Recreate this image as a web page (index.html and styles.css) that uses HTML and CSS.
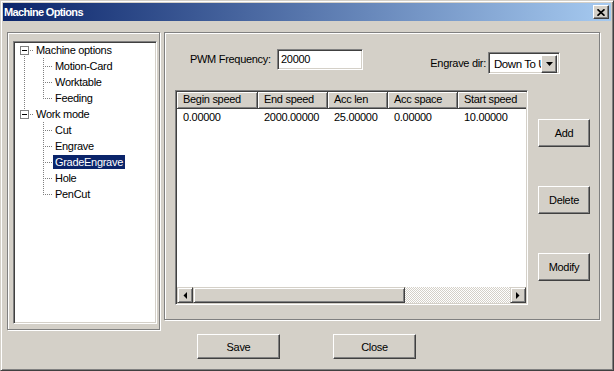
FILE: index.html
```html
<!DOCTYPE html>
<html lang="en">

<head>
    <meta charset="UTF-8">
    <title>Machine Options</title>
    <link rel="stylesheet" href="styles.css">
</head>

<body>

    <div class="ventana">
        <div class="titulo">
            <span class="titulo-texto">Machine Options</span>
            <span class="btn-cerrar">
                <svg width="8" height="7" viewBox="0 0 8 7"><path d="M0.5 0.3L7.5 6.7M7.5 0.3L0.5 6.7" stroke="#000" stroke-width="1.7" /></svg>
            </span>
        </div>

        <div class="cuerpo">
            <!-- arbol de opciones -->
            <div class="grupo grupo-izq">
                <div class="arbol">
                    <div class="nodo"><span class="g g-primero"><i class="caja"></i></span><span class="txt">Machine options</span></div>
                    <div class="nodo"><span class="g g-pipe"></span><span class="g g-tee"></span><span class="txt">Motion-Card</span></div>
                    <div class="nodo"><span class="g g-pipe"></span><span class="g g-tee"></span><span class="txt">Worktable</span></div>
                    <div class="nodo"><span class="g g-pipe"></span><span class="g g-fin"></span><span class="txt">Feeding</span></div>
                    <div class="nodo"><span class="g g-ultimo"><i class="caja"></i></span><span class="txt">Work mode</span></div>
                    <div class="nodo"><span class="g"></span><span class="g g-tee"></span><span class="txt">Cut</span></div>
                    <div class="nodo"><span class="g"></span><span class="g g-tee"></span><span class="txt">Engrave</span></div>
                    <div class="nodo"><span class="g"></span><span class="g g-tee"></span><span class="txt sel">GradeEngrave</span></div>
                    <div class="nodo"><span class="g"></span><span class="g g-tee"></span><span class="txt">Hole</span></div>
                    <div class="nodo"><span class="g"></span><span class="g g-fin"></span><span class="txt">PenCut</span></div>
                </div>
            </div>

            <div class="columna-der">
                <div class="grupo grupo-der">
                    <div class="fila-arriba">
                        <span class="lbl-pwm">PWM Frequency:</span>
                        <span class="campo">20000</span>
                        <span class="lbl-dir">Engrave dir:</span>
                        <span class="combo">
                            <span class="combo-txt">Down To Up</span>
                            <span class="combo-btn"><svg width="7" height="4" viewBox="0 0 7 4"><path d="M0 0H7L3.5 4Z" /></svg></span>
                        </span>
                    </div>

                    <div class="fila-main">
                        <div class="lista">
                            <div class="cabecera">
                                <span class="col c1">Begin speed</span>
                                <span class="col c2">End speed</span>
                                <span class="col c3">Acc len</span>
                                <span class="col c4">Acc space</span>
                                <span class="col c5">Start speed</span>
                            </div>
                            <div class="filas">
                                <div class="reg">
                                    <span class="col c1">0.00000</span>
                                    <span class="col c2">2000.00000</span>
                                    <span class="col c3">25.00000</span>
                                    <span class="col c4">0.00000</span>
                                    <span class="col c5">10.00000</span>
                                </div>
                            </div>
                            <div class="scroll-h">
                                <span class="sb-btn"><svg width="4" height="7" viewBox="0 0 4 7"><path d="M4 0V7L0.5 3.5Z" /></svg></span>
                                <span class="sb-thumb"></span>
                                <span class="sb-track"></span>
                                <span class="sb-btn"><svg width="4" height="7" viewBox="0 0 4 7"><path d="M0 0V7L3.5 3.5Z" /></svg></span>
                            </div>
                        </div>

                        <div class="botones-der">
                            <span class="boton b-lado">Add</span>
                            <span class="boton b-lado">Delete</span>
                            <span class="boton b-lado">Modify</span>
                        </div>
                    </div>
                </div>

                <div class="botones-abajo">
                    <span class="boton b-abajo">Save</span>
                    <span class="boton b-abajo">Close</span>
                </div>
            </div>
        </div>
    </div>

</body>

</html>
```

FILE: styles.css
```css
/*general: fuente de dialogo y fondo*/
body {
    margin: 0;
    background: #d4d0c8;
    font-family: "Liberation Sans", Arial, sans-serif;
    font-size: 11px;
    letter-spacing: -0.3px;
    color: #000;
}

/*marco de la ventana*/
.ventana {
    width: 614px;
    height: 371px;
    box-sizing: border-box;
    padding: 2px;
    border: 1px solid;
    border-color: #d4d0c8 #404040 #404040 #d4d0c8;
    box-shadow: inset 1px 1px #fff, inset -1px -1px #808080;
    background: #d4d0c8;
}

/*barra de titulo*/
.titulo {
    height: 18px;
    display: flex;
    align-items: center;
    justify-content: space-between;
    padding-left: 1px;
    background: linear-gradient(to right, #0a246a, #a6caf0);
}

.titulo-texto {
    color: #fff;
    font-weight: bold;
    letter-spacing: -0.65px;
}

.btn-cerrar {
    width: 16px;
    height: 14px;
    margin-right: 2px;
    box-sizing: border-box;
    display: flex;
    align-items: center;
    justify-content: center;
    background: #d4d0c8;
    border: 1px solid;
    border-color: #fff #404040 #404040 #fff;
    box-shadow: inset -1px -1px #808080;
}

.cuerpo {
    display: flex;
    gap: 4px;
    padding: 11px 0 0 4px;
}

/*cajas grabadas*/
.grupo {
    box-sizing: border-box;
    border: 1px solid #808080;
    box-shadow: inset 1px 1px #fff, 1px 1px #fff;
}

.grupo-izq {
    width: 153px;
    height: 298px;
    padding: 8px 0 0 5px;
}

/*arbol: borde hundido*/
.arbol {
    width: 144px;
    height: 283px;
    box-sizing: border-box;
    padding: 0 0 0 1px;
    background: #fff;
    border: 1px solid;
    border-color: #808080 #fff #fff #808080;
    box-shadow: inset 1px 1px #404040, inset -1px -1px #d4d0c8;
}

.nodo {
    display: flex;
    align-items: center;
    height: 16px;
    white-space: nowrap;
}

/*celdas de lineas punteadas*/
.g {
    width: 19px;
    height: 16px;
    flex: none;
    display: flex;
    justify-content: center;
    align-items: flex-start;
    background-repeat: no-repeat;
}

.g-tee,
.g-fin,
.g-pipe,
.g-primero,
.g-ultimo {
    background-image: repeating-linear-gradient(to bottom, #808080 0 1px, transparent 1px 2px),
        repeating-linear-gradient(to right, #808080 0 1px, transparent 1px 2px);
}

.g-tee {
    background-size: 1px 16px, 10px 1px;
    background-position: 9px 0, 9px 8px;
}

.g-fin {
    background-size: 1px 9px, 10px 1px;
    background-position: 9px 0, 9px 8px;
}

.g-pipe {
    background-size: 1px 16px, 0 0;
    background-position: 9px 0, 0 0;
}

.g-primero {
    background-size: 1px 8px, 10px 1px;
    background-position: 9px 8px, 9px 8px;
}

.g-ultimo {
    background-size: 1px 8px, 10px 1px;
    background-position: 9px 0, 9px 8px;
}

/*cuadro del signo menos*/
.caja {
    width: 9px;
    height: 9px;
    margin-top: 4px;
    box-sizing: border-box;
    border: 1px solid #808080;
    background: linear-gradient(#000, #000) center / 5px 1px no-repeat, #fff;
}

.txt {
    padding: 0 2px;
    line-height: 14px;
}

.txt.sel {
    background: #0a246a;
    color: #fff;
}

.columna-der {
    display: flex;
    flex-direction: column;
}

.grupo-der {
    width: 436px;
    height: 288px;
    padding: 16px 0 0 10px;
}

/*fila de frecuencia y direccion*/
.fila-arriba {
    display: flex;
    align-items: flex-start;
    height: 25px;
}

.lbl-pwm {
    width: 87px;
    margin-left: 15px;
    line-height: 21px;
}

.campo,
.combo {
    box-sizing: border-box;
    background: #fff;
    border: 1px solid;
    border-color: #808080 #fff #fff #808080;
    box-shadow: inset 1px 1px #404040, inset -1px -1px #d4d0c8;
}

.campo {
    width: 86px;
    height: 21px;
    padding: 0 3px;
    line-height: 18px;
}

.lbl-dir {
    width: 125px;
    margin-top: 3px;
    padding-right: 2px;
    box-sizing: border-box;
    text-align: right;
    line-height: 22px;
}

.combo {
    width: 72px;
    height: 22px;
    margin-top: 3px;
    padding: 2px;
    display: flex;
}

.combo-txt {
    flex: 1;
    overflow: hidden;
    white-space: nowrap;
    padding-left: 3px;
    line-height: 19px;
    font-size: 11.5px;
    letter-spacing: -0.45px;
}

.combo-btn {
    width: 16px;
    height: 18px;
    flex: none;
    box-sizing: border-box;
    display: flex;
    align-items: center;
    justify-content: center;
    background: #d4d0c8;
    border: 1px solid;
    border-color: #fff #404040 #404040 #fff;
    box-shadow: inset -1px -1px #808080;
}

.fila-main {
    display: flex;
    margin-top: 16px;
}

/*lista de velocidades*/
.lista {
    width: 353px;
    height: 215px;
    box-sizing: border-box;
    display: flex;
    flex-direction: column;
    overflow: hidden;
    background: #fff;
    border: 1px solid;
    border-color: #808080 #fff #fff #808080;
    box-shadow: inset 1px 1px #404040, inset -1px -1px #d4d0c8;
    padding: 1px;
}

.cabecera {
    display: flex;
    height: 17px;
    flex: none;
    overflow: hidden;
}

.cabecera .col {
    background: #d4d0c8;
    border-right: 1px solid #404040;
    border-bottom: 1px solid #404040;
    box-shadow: inset 1px 1px #fff, inset -1px -1px #808080;
    line-height: 15px;
}

.col {
    flex: none;
    box-sizing: border-box;
    padding-left: 6px;
    white-space: nowrap;
}

.c1 { width: 81px; }
.c2 { width: 70px; }
.c3 { width: 60px; }
.c4 { width: 70px; }
.c5 { width: 90px; }

.filas {
    flex: 1;
}

.reg {
    display: flex;
    height: 16px;
    line-height: 16px;
}

/*barra de desplazamiento horizontal*/
.scroll-h {
    display: flex;
    height: 16px;
    flex: none;
}

.sb-btn,
.sb-thumb,
.boton {
    box-sizing: border-box;
    background: #d4d0c8;
    border: 1px solid;
    border-color: #d4d0c8 #404040 #404040 #d4d0c8;
    box-shadow: inset 1px 1px #fff, inset -1px -1px #808080;
}

.sb-btn {
    width: 16px;
    display: flex;
    align-items: center;
    justify-content: center;
}

.sb-thumb {
    width: 212px;
}

.sb-track {
    flex: 1;
    background: repeating-conic-gradient(#fff 0 25%, #d4d0c8 0 50%) 0 0 / 2px 2px;
}

/*botones*/
.boton {
    display: flex;
    align-items: center;
    justify-content: center;
    border-color: #fff #404040 #404040 #fff;
    box-shadow: inset -1px -1px #808080;
}

.botones-der {
    display: flex;
    flex-direction: column;
    gap: 39px;
    margin-left: 10px;
    padding-top: 29px;
}

.b-lado {
    width: 52px;
    height: 28px;
}

.botones-abajo {
    display: flex;
    gap: 53px;
    margin-top: 14px;
    padding-left: 33px;
}

.b-abajo {
    width: 83px;
    height: 25px;
}
```
